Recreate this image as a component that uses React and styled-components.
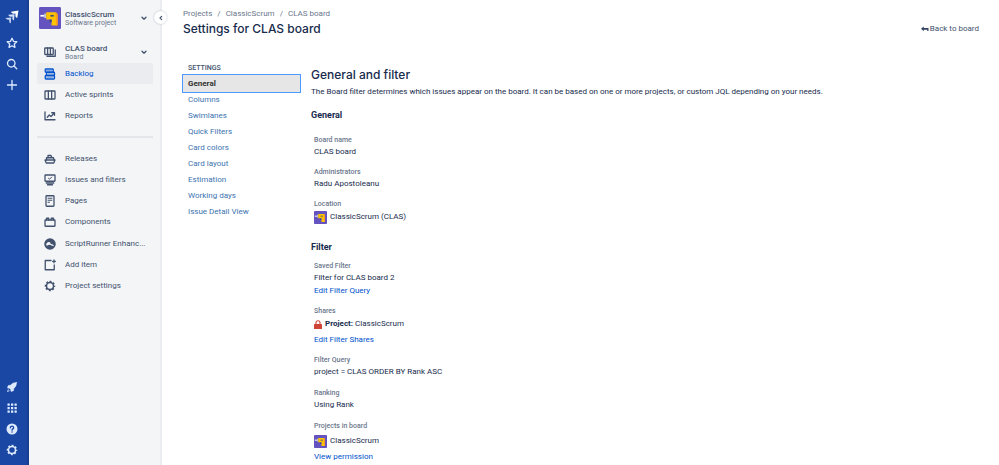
import styled, { createGlobalStyle } from "styled-components";

const GlobalStyle = createGlobalStyle`
  * {
    box-sizing: border-box;
  }

  body {
    margin: 0;
    background: #fff;
    color: #172b4d;
    font-family: Roboto, "Liberation Sans", sans-serif;
    font-size: 8px;
    line-height: 10px;
  }

  h1, h2, h3, p, ul, ol, dl, dd {
    margin: 0;
    padding: 0;
  }

  ul, ol {
    list-style: none;
  }

  a {
    color: inherit;
    text-decoration: none;
  }

  button {
    border: 0;
    padding: 0;
    background: none;
    color: inherit;
    font: inherit;
    cursor: pointer;
  }
`;

// every line icon is drawn on a 24 unit grid
const Icon = ({ size = 12, children }) => (
  <svg
    width={size}
    height={size}
    viewBox="0 0 24 24"
    fill="none"
    stroke="currentColor"
    strokeWidth="2.6"
    strokeLinecap="round"
    strokeLinejoin="round"
    aria-hidden="true"
  >
    {children}
  </svg>
);

const LogoIcon = () => (
  <svg width="14" height="14" viewBox="0 0 28 28" aria-hidden="true">
    <path d="M12 3.500L27 1l-2.500 15c-2.800-1-4-3-3.800-6l.3-3-3 .3c-3 .2-5-1-6-3.800z" fill="#fff" />
    <path d="M6.500 9.500L19 8.500l-1 12.500c-2.300-.9-3.500-2.600-3.300-5l.3-3-3 .3c-2.500.2-4.500-1.200-5.500-3.800z" fill="#d3e0f7" />
    <path d="M1 16l11.500-1-1 11.500c-2.200-.9-3.300-2.500-3.100-4.700l.2-2.400-2.400.2C4 18.800 2 18 1 16z" fill="#c3d4f2" />
  </svg>
);

const StarIcon = () => (
  <Icon>
    <path d="M12 2.500l2.900 6.100 6.700.9-4.900 4.600 1.200 6.700-5.900-3.200-5.900 3.200 1.200-6.700-4.900-4.600 6.700-.9z" />
  </Icon>
);

const SearchIcon = () => (
  <Icon>
    <circle cx="10.500" cy="10.500" r="7.500" />
    <path d="M16 16l5.500 5.500" />
  </Icon>
);

const PlusIcon = () => (
  <Icon>
    <path d="M12 3v18M3 12h18" />
  </Icon>
);

const RocketIcon = () => (
  <Icon>
    <path
      d="M21 3c-5 0-9 1.500-12 5.500L4.500 9 3 14l4 .5L9.500 17l.5 4 5-1.500.5-4.500C19.500 12 21 8 21 3z"
      fill="currentColor"
      strokeWidth="1"
    />
    <path d="M4.500 17.500l-1.500 3.500 3.500-1.500" strokeWidth="1.600" />
  </Icon>
);

const AppsIcon = () => (
  <Icon>
    {[3, 10, 17].map((y) =>
      [3, 10, 17].map((x) => (
        <rect key={`${x}-${y}`} x={x} y={y} width="4.500" height="4.500" fill="currentColor" stroke="none" />
      ))
    )}
  </Icon>
);

const HelpIcon = () => (
  <Icon>
    <circle cx="12" cy="12" r="11" fill="currentColor" stroke="none" />
    <path d="M8.800 9.500c0-4.200 6.500-4 6.500-.2 0 2.500-3.200 2.400-3.200 5" stroke="#1a47a3" />
    <circle cx="12.100" cy="18" r="1.500" fill="#1a47a3" stroke="none" />
  </Icon>
);

const GearIcon = () => (
  <Icon>
    <circle cx="12" cy="12" r="7" strokeWidth="3" />
    <circle cx="12" cy="12" r="9" strokeWidth="3" strokeLinecap="butt" strokeDasharray="3.870 3.200" strokeDashoffset="1.935" />
  </Icon>
);

const BoardsIcon = () => (
  <Icon>
    <rect x="1.500" y="4" width="17" height="13" rx="1" />
    <path d="M7.200 4v13M12.800 4v13M22.500 8v12.500H6" />
  </Icon>
);

const BacklogIcon = () => (
  <Icon>
    <rect x="2.500" y="2" width="16" height="6.500" rx="1.500" />
    <rect x="5" y="8.500" width="16" height="6.500" rx="1.500" />
    <rect x="2.500" y="15" width="18.500" height="7" rx="1.500" />
    <path d="M5 5.300h11M8 11.700h11M5 18.500h13" strokeWidth="1" />
  </Icon>
);

const SprintsIcon = () => (
  <Icon>
    <rect x="2" y="4" width="20" height="16" rx="1" />
    <path d="M8.700 4v16M15.300 4v16" />
  </Icon>
);

const ReportsIcon = () => (
  <Icon>
    <path d="M2 4v15.500h20" />
    <path d="M6.500 14.500l4-4.500 3.500 3 6.500-7M15.500 5.500h5.500v5" />
  </Icon>
);

const ShipIcon = () => (
  <Icon>
    <path d="M2 14h20l-2.500 6h-15z" />
    <path d="M5 13.500V9.500h14l1 4M8 9V5h6l1.500 4" />
  </Icon>
);

const IssuesIcon = () => (
  <Icon>
    <rect x="2" y="2" width="20" height="12.500" rx="1" />
    <path d="M9 8.500l2.200 2 4-4.300" strokeWidth="2" />
    <path d="M4.500 18h15M7 21.500h10" />
  </Icon>
);

const PageIcon = () => (
  <Icon>
    <rect x="4" y="1.500" width="16" height="21" rx="1.500" />
    <path d="M8 6.500h8M8 10.500h8M8 14.500h3" strokeWidth="2" />
  </Icon>
);

const ComponentIcon = () => (
  <Icon>
    <rect x="2" y="8" width="20" height="12.500" rx="1" />
    <path d="M5 8V4.500h4.500V8M14.500 8V4.500H19V8" />
  </Icon>
);

const ScriptRunnerIcon = () => (
  <Icon>
    <circle cx="12" cy="12" r="11.500" fill="currentColor" stroke="none" />
    <path d="M4 14.500c1-5 4-7.500 8-6l1.500 3.500 3.500.5 3.500 4c-3-.5-5-1-7-2.500l-3.500-.5-2.500 1.500z" fill="#f4f5f7" stroke="none" />
  </Icon>
);

const AddItemIcon = () => (
  <Icon>
    <path d="M14 3H2.500v18.500h18V12" />
    <path d="M20 2v5.500M17.300 4.800h5.400" />
  </Icon>
);

const ChevronDown = () => (
  <Icon size={8}>
    <path d="M6 9.500l6 6 6-6" strokeWidth="4" />
  </Icon>
);

const ChevronLeft = () => (
  <Icon size={8}>
    <path d="M14 7l-5 5 5 5" strokeWidth="3.500" />
  </Icon>
);

const BackIcon = () => (
  <svg width="8" height="6" viewBox="0 0 16 12" aria-hidden="true">
    <path d="M5.500 1v3H15v6h-2.500V7.500h-7V10.500L0 5.700z" fill="#344563" />
  </svg>
);

const LockIcon = () => (
  <svg width="8" height="9" viewBox="0 0 16 18" aria-hidden="true">
    <path d="M4 9V5.500a4 4 0 0 1 8 0V9" fill="none" stroke="#d04437" strokeWidth="2.200" />
    <rect x="0" y="8" width="16" height="10" rx="1" fill="#d04437" />
  </svg>
);

const ProjectAvatar = ({ size = 13 }) => (
  <svg width={size} height={size} viewBox="0 0 64 64" aria-hidden="true">
    <rect width="64" height="64" rx="4" fill="#6554c0" />
    <path d="M4 23h12v5H4z" fill="#fff" />
    <path d="M15 19h6v13h-6z" fill="#c1c7d0" />
    <path d="M21 15h25c5 0 8 3 8 8v27c0 3-1 4-4 4H39c-2 0-3-1-3-3l2-15H21z" fill="#ffc400" />
    <path d="M48 15c4 1 6 4 6 8v27c0 3-1 4-4 4z" fill="#ff991f" />
    <path d="M33 23h10v5H33z" fill="#42526e" />
    <path d="M31 37h5v7h-5z" fill="#344563" />
  </svg>
);

const boardLinks = [
  { label: "Backlog", icon: BacklogIcon, active: true },
  { label: "Active sprints", icon: SprintsIcon },
  { label: "Reports", icon: ReportsIcon },
];

const projectLinks = [
  { label: "Releases", icon: ShipIcon },
  { label: "Issues and filters", icon: IssuesIcon },
  { label: "Pages", icon: PageIcon },
  { label: "Components", icon: ComponentIcon },
  { label: "ScriptRunner Enhanc...", icon: ScriptRunnerIcon },
  { label: "Add item", icon: AddItemIcon },
  { label: "Project settings", icon: GearIcon },
];

const settingsLinks = [
  "General",
  "Columns",
  "Swimlanes",
  "Quick Filters",
  "Card colors",
  "Card layout",
  "Estimation",
  "Working days",
  "Issue Detail View",
];

const NavList = ({ links, height }) => (
  <SideList $height={height}>
    {links.map(({ label, icon: LinkIcon, active }) => (
      <li key={label}>
        <SideLink href="#" $active={active}>
          <LinkIcon />
          {label}
        </SideLink>
      </li>
    ))}
  </SideList>
);

const App = () => {
  return (
    <>
      <GlobalStyle />
      <Page>
        <Rail aria-label="Global">
          <RailGroup>
            <LogoLink href="#" aria-label="Jira">
              <LogoIcon />
            </LogoLink>
            <RailButton aria-label="Starred"><StarIcon /></RailButton>
            <RailButton aria-label="Search"><SearchIcon /></RailButton>
            <RailButton aria-label="Create"><PlusIcon /></RailButton>
          </RailGroup>
          <RailGroup>
            <RailButton aria-label="What's new"><RocketIcon /></RailButton>
            <RailButton aria-label="Apps"><AppsIcon /></RailButton>
            <RailButton aria-label="Help"><HelpIcon /></RailButton>
            <RailButton aria-label="Settings"><GearIcon /></RailButton>
          </RailGroup>
        </Rail>

        <Sidebar>
          <ProjectSwitch>
            <ProjectAvatar size={22} />
            <SwitchText>
              <SwitchName>ClassicScrum</SwitchName>
              <SwitchKind>Software project</SwitchKind>
            </SwitchText>
            <ChevronDown />
          </ProjectSwitch>
          <BoardSwitch>
            <BoardsIcon />
            <SwitchText>
              <SwitchName>CLAS board</SwitchName>
              <SwitchKind>Board</SwitchKind>
            </SwitchText>
            <ChevronDown />
          </BoardSwitch>
          <NavList links={boardLinks} height={64} />
          <Divider />
          <NavList links={projectLinks} height={149} />
          <CollapseButton aria-label="Collapse sidebar">
            <ChevronLeft />
          </CollapseButton>
        </Sidebar>

        <Main>
          <Breadcrumbs>
            <li><a href="#">Projects</a></li>
            <li><a href="#">ClassicScrum</a></li>
            <li><a href="#">CLAS board</a></li>
          </Breadcrumbs>
          <TitleRow>
            <Title>Settings for CLAS board</Title>
            <BackLink href="#">
              <BackIcon />
              Back to board
            </BackLink>
          </TitleRow>

          <Columns>
            <SettingsNav aria-label="Board settings">
              <SettingsHeading>SETTINGS</SettingsHeading>
              <ul>
                {settingsLinks.map((label) => (
                  <li key={label}>
                    <SettingsLink href="#" $active={label === "General"}>{label}</SettingsLink>
                  </li>
                ))}
              </ul>
            </SettingsNav>

            <Content>
              <ContentTitle>General and filter</ContentTitle>
              <Intro>
                The Board filter determines which issues appear on the board. It can be based on one
                or more projects, or custom JQL depending on your needs.
              </Intro>

              <SectionTitle>General</SectionTitle>
              <Fields $top={14} $gap={8}>
                <div>
                  <Term>Board name</Term>
                  <Value>CLAS board</Value>
                </div>
                <div>
                  <Term>Administrators</Term>
                  <Value>Radu Apostoleanu</Value>
                </div>
                <div>
                  <Term>Location</Term>
                  <Value $height={16}><ProjectAvatar />ClassicScrum (CLAS)</Value>
                </div>
              </Fields>

              <SectionTitle $spaced>Filter</SectionTitle>
              <Fields $top={8} $gap={9}>
                <div>
                  <Term>Saved Filter</Term>
                  <Value>Filter for CLAS board 2</Value>
                  <FieldLink><a href="#">Edit Filter Query</a></FieldLink>
                </div>
                <div>
                  <Term>Shares</Term>
                  <Value $height={16}>
                    <LockIcon />
                    <span><b>Project:</b> ClassicScrum</span>
                  </Value>
                  <FieldLink $spaced><a href="#">Edit Filter Shares</a></FieldLink>
                </div>
                <div>
                  <Term>Filter Query</Term>
                  <Value>project = CLAS ORDER BY Rank ASC</Value>
                </div>
                <div>
                  <Term>Ranking</Term>
                  <Value>Using Rank</Value>
                </div>
                <div>
                  <Term>Projects in board</Term>
                  <Value $height={20}><ProjectAvatar />ClassicScrum</Value>
                  <FieldLink><a href="#">View permission</a></FieldLink>
                </div>
              </Fields>
            </Content>
          </Columns>
        </Main>
      </Page>
    </>
  );
};

export default App;

const Page = styled.div`
  display: flex;
  min-height: 100vh;
`;

const Rail = styled.nav`
  display: flex;
  flex-direction: column;
  justify-content: space-between;
  flex: 0 0 29px;
  padding: 8px 6px 5px 0;
  background: linear-gradient(to left, #153a8a, #1a47a3 3px);
  color: #deebff;
`;

const RailGroup = styled.div`
  display: flex;
  flex-direction: column;
  align-items: center;
`;

const LogoLink = styled.a`
  display: flex;
  margin: 2px 0 8px;
`;

const RailButton = styled.button`
  display: flex;
  align-items: center;
  justify-content: center;
  width: 21px;
  height: 21px;
`;

const Sidebar = styled.aside`
  position: relative;
  flex: 0 0 133px;
  padding: 7px 7px 0 8px;
  border-right: 2px solid #ebecf0;
  background: #f4f5f7;
  color: #42526e;
`;

const ProjectSwitch = styled.button`
  display: flex;
  align-items: center;
  gap: 4px;
  width: 100%;
  height: 22px;
  padding: 0 5px 0 2px;
  text-align: left;
`;

const BoardSwitch = styled(ProjectSwitch)`
  gap: 9px;
  margin: 12px 0 0;
  padding-left: 7px;
`;

const SwitchText = styled.span`
  display: flex;
  flex: 1;
  flex-direction: column;
`;

const SwitchName = styled.span`
  font-weight: 500;
  line-height: 9px;
`;

const SwitchKind = styled.span`
  color: #6b778c;
  font-size: 7px;
  line-height: 8px;
`;

const SideList = styled.ul`
  display: grid;
  grid-auto-rows: 1fr;
  height: ${(props) => props.$height}px;
`;

const SideLink = styled.a`
  display: flex;
  align-items: center;
  gap: 9px;
  height: 100%;
  padding-left: 7px;
  border-radius: 2px;
  background: ${(props) => (props.$active ? "#ebecf0" : "transparent")};
  color: ${(props) => (props.$active ? "#0052cc" : "inherit")};
`;

const Divider = styled.hr`
  height: 2px;
  margin: 9px 0 10px;
  border: 0;
  background: #e4e6ea;
`;

const CollapseButton = styled.button`
  position: absolute;
  top: 11px;
  right: -7px;
  display: flex;
  align-items: center;
  justify-content: center;
  width: 13px;
  height: 13px;
  border-radius: 50%;
  background: #fff;
  box-shadow: 0 0 2px rgba(9, 30, 66, 0.3);
`;

const Main = styled.main`
  flex: 1;
  min-width: 0;
  padding: 9px 20px 0 21px;
`;

const Breadcrumbs = styled.ol`
  display: flex;
  color: #6b778c;

  li + li::before {
    content: "/";
    margin: 0 5px;
  }
`;

const TitleRow = styled.div`
  display: flex;
  align-items: center;
  justify-content: space-between;
  height: 20px;
`;

const Title = styled.h1`
  font-family: Inter, "Liberation Sans", sans-serif;
  font-size: 12px;
  font-weight: 500;
  line-height: 16px;
`;

const BackLink = styled.a`
  display: flex;
  align-items: center;
  gap: 1px;
  color: #42526e;
`;

const Columns = styled.div`
  display: flex;
  gap: 11px;
  margin-top: 23px;
`;

const SettingsNav = styled.nav`
  flex: 0 0 117px;
`;

const SettingsHeading = styled.h3`
  padding-left: 5px;
  color: #42526e;
  font-size: 7px;
  font-weight: 500;
  line-height: 13px;
`;

const SettingsLink = styled.a`
  display: flex;
  align-items: center;
  height: ${(props) => (props.$active ? 17 : 16)}px;
  padding-left: 5px;
  outline: ${(props) => (props.$active ? "1px solid #4c9aff" : "none")};
  background: ${(props) => (props.$active ? "#e6e6e6" : "transparent")};
  color: ${(props) => (props.$active ? "#333" : "#3b73af")};
  font-weight: ${(props) => (props.$active ? 700 : 400)};
`;

const Content = styled.section`
  flex: 1;
  min-width: 0;
  padding-top: 5px;
`;

const ContentTitle = styled.h2`
  font-family: Inter, "Liberation Sans", sans-serif;
  font-size: 12px;
  font-weight: 500;
  line-height: 16px;
`;

const Intro = styled.p`
  margin: 4px 0 12px;
`;

const SectionTitle = styled.h3`
  margin-top: ${(props) => (props.$spaced ? 16 : 0)}px;
  font-size: 9px;
  font-weight: 700;
  line-height: 12px;
`;

const Fields = styled.dl`
  display: flex;
  flex-direction: column;
  gap: ${(props) => props.$gap}px;
  padding: ${(props) => props.$top}px 3px 0;
`;

const Term = styled.dt`
  color: #6b778c;
  font-size: 7px;
  font-weight: 500;
`;

const Value = styled.dd`
  display: flex;
  align-items: center;
  gap: 3px;
  height: ${(props) => props.$height || 14}px;
`;

const FieldLink = styled.dd`
  margin-top: ${(props) => (props.$spaced ? 2 : 0)}px;
  color: #0052cc;
  line-height: 12px;
`;
